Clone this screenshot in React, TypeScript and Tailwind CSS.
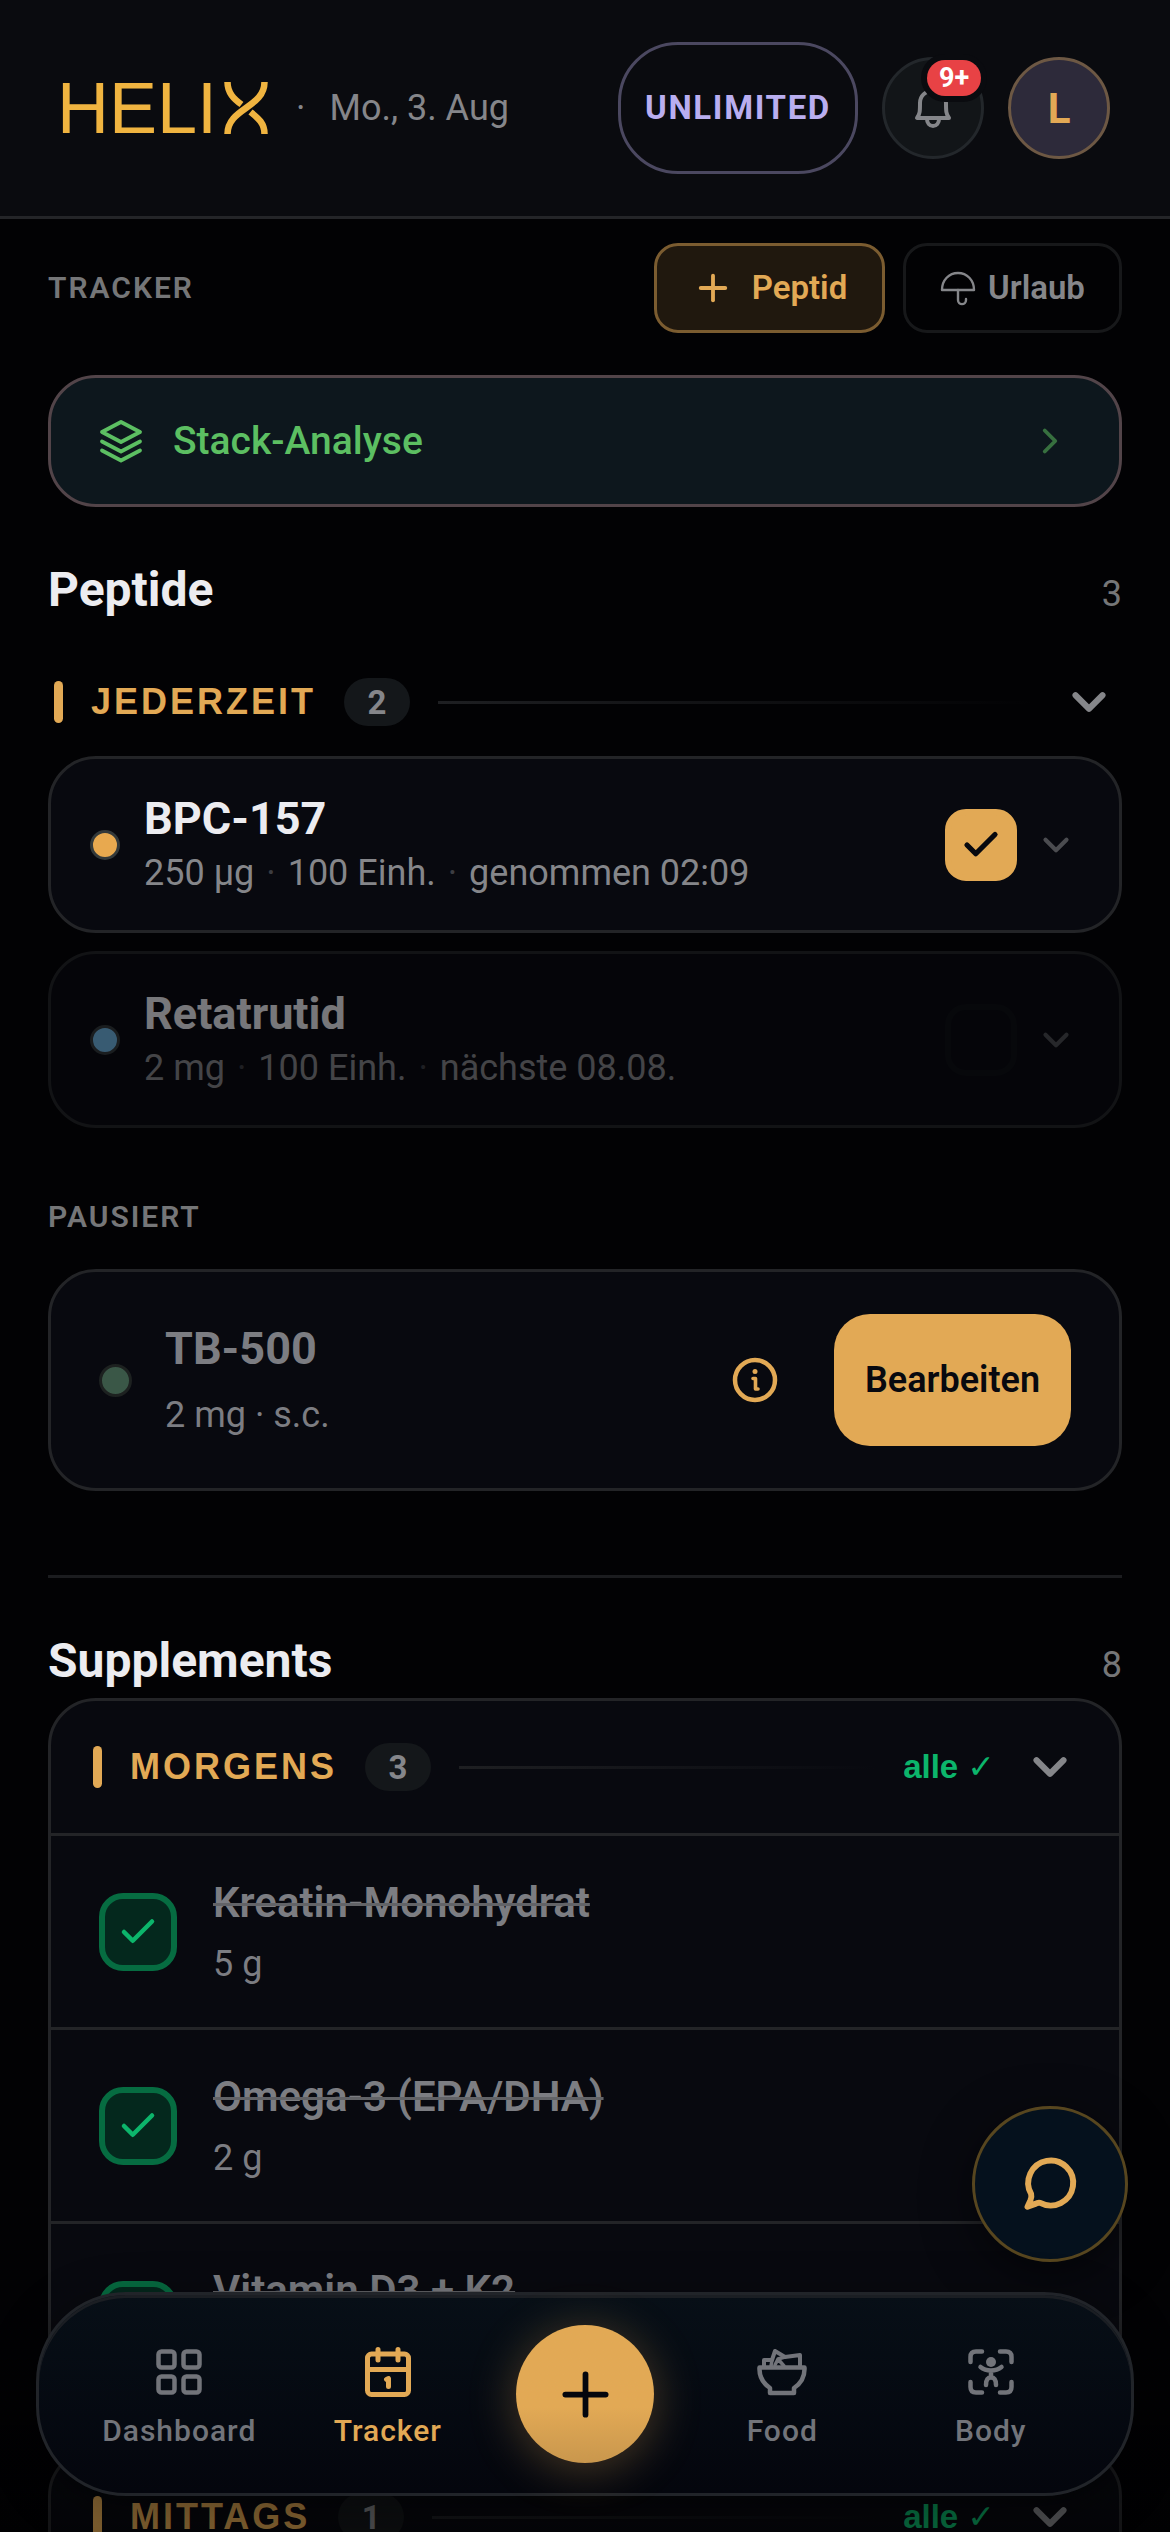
import React from "react";
import { Check, ChevronDown, ChevronRight, Plus } from "lucide-react";

interface Peptide {
  name: string;
  details: string[];
  dot: string;
  taken: boolean;
}

interface Supplement {
  name: string;
  dose: string;
}

const peptides: Peptide[] = [
  {
    name: "BPC-157",
    details: ["250 µg", "100 Einh.", "genommen 02:09"],
    dot: "bg-[#e8a94f] border-[#33393a]",
    taken: true,
  },
  {
    name: "Retatrutid",
    details: ["2 mg", "100 Einh.", "nächste 08.08."],
    dot: "bg-[#6fb3e0] border-[#33393a]",
    taken: false,
  },
];

const morningSupplements: Supplement[] = [
  { name: "Kreatin-Monohydrat", dose: "5 g" },
  { name: "Omega-3 (EPA/DHA)", dose: "2 g" },
  { name: "Vitamin D3 + K2", dose: "1 Kapsel" },
];

function HelixMark() {
  return (
    <svg viewBox="0 0 44 52" className="ml-[7px] w-[44px] h-[52px]" fill="none" stroke="#f0b440" strokeWidth="6.5">
      <path d="M3.5 0C3.5 11 10 17 17.5 22.5" />
      <path d="M26.5 30C34 36 40.500 41 40.500 52" />
      <path d="M40.500 0C40.500 26 3.500 26 3.500 52" />
    </svg>
  );
}

function BellIcon() {
  return (
    <svg viewBox="0 0 40 42" className="w-10 h-[42px]" fill="none" stroke="#85868a" strokeWidth="4" strokeLinecap="round" strokeLinejoin="round">
      <path d="M4 31H36C33 27 33 24 33 16C33 9 28 4 20 4S7 9 7 16C7 24 7 27 4 31Z" />
      <path d="M14 32C14 36 16.500 39 20 39S26 36 26 32" />
    </svg>
  );
}

function UmbrellaIcon() {
  return (
    <svg viewBox="0 0 36 36" className="w-9 h-9" fill="none" stroke="currentColor" strokeWidth="2.400" strokeLinecap="round" strokeLinejoin="round">
      <path d="M2 20C2 10 9 3 18 3S34 10 34 20Z" />
      <path d="M18 20V30C18 35.500 26 35.500 26 30V29" />
    </svg>
  );
}

function StackIcon() {
  return (
    <svg viewBox="0 0 44 44" className="w-11 h-11" fill="none" stroke="currentColor" strokeWidth="3.800" strokeLinecap="round" strokeLinejoin="round">
      <path d="M22 3L41 13L22 23L3 13Z" />
      <path d="M3 22.500L22 32.500L41 22.500" />
      <path d="M3 31.500L22 41.500L41 31.500" />
    </svg>
  );
}

function InfoIcon() {
  return (
    <svg viewBox="0 0 46 46" className="w-[46px] h-[46px]" fill="none" stroke="currentColor" strokeWidth="4.500" strokeLinecap="round" strokeLinejoin="round">
      <circle cx="23" cy="23" r="20" />
      <path d="M21 21.500H23.500V32H26" strokeWidth="3.600" />
      <circle cx="23" cy="14.500" r="2.500" fill="currentColor" stroke="none" />
    </svg>
  );
}

function ChatIcon() {
  return (
    <svg viewBox="0 0 24 24" className="w-[62px] h-[62px]" fill="none" stroke="currentColor" strokeWidth="2.300" strokeLinecap="round" strokeLinejoin="round">
      <path d="M8.200 19.300A8.700 8.700 0 1 0 4.700 15.900Q5 17 4.400 18.400L3.300 20.800L6.300 19.700Q7.300 19.100 8.200 19.300Z" />
    </svg>
  );
}

function DashboardIcon() {
  return (
    <svg viewBox="0 0 50 50" className="w-[50px] h-[50px]" fill="none" stroke="currentColor" strokeWidth="4.500">
      <rect x="4.500" y="4.500" width="16" height="16" rx="3" />
      <rect x="29.500" y="4.500" width="16" height="16" rx="3" />
      <rect x="4.500" y="29.500" width="16" height="16" rx="3" />
      <rect x="29.500" y="29.500" width="16" height="16" rx="3" />
    </svg>
  );
}

function TrackerIcon() {
  return (
    <svg viewBox="0 0 50 50" className="w-[50px] h-[50px]" fill="none" stroke="currentColor" strokeWidth="5" strokeLinecap="round" strokeLinejoin="round">
      <rect x="4.500" y="7" width="41" height="40.500" rx="4" />
      <path d="M5 22.500H45M15 2.500V13M35 2.500V13" />
      <path d="M23.500 32.500L25.500 31.500V39.500" />
    </svg>
  );
}

function FoodIcon() {
  return (
    <svg viewBox="0 0 50 50" className="w-[50px] h-[50px]" fill="none" stroke="currentColor" strokeWidth="4.500" strokeLinecap="round" strokeLinejoin="round">
      <path d="M2.500 20.500H47.500C48 30 43 37 37 41V46H13V41C7 37 2 30 2.500 20.500Z" />
      <path d="M7 19V13H15L18 4L28 10L43 8V19" strokeWidth="4" />
      <path d="M15 13L14 19M18 18L21 12L28 10M21 12L27 19" strokeWidth="3.500" />
    </svg>
  );
}

function BodyIcon() {
  return (
    <svg viewBox="0 0 50 50" className="w-[50px] h-[50px]" fill="none" stroke="currentColor" strokeWidth="4.500" strokeLinecap="round" strokeLinejoin="round">
      <path d="M4.500 15V10Q4.500 4.500 10 4.500H16M34 4.500H40Q45.500 4.500 45.500 10V15M45.500 35V40Q45.500 45.500 40 45.500H34M16 45.500H10Q4.500 45.500 4.500 40V35" />
      <circle cx="25" cy="15" r="5" fill="currentColor" stroke="none" />
      <path d="M14.500 20C20 24.500 30 24.500 35.500 20M25 24V30M20 38C20 32 22 30.500 25 30.500S30 32 30 38" />
    </svg>
  );
}

function GroupHeader({ title, count, done }: { title: string; count: number; done?: boolean }) {
  return (
    <div className="flex items-center gap-7">
      <span className="w-[9px] h-[42px] rounded-full bg-[#e2a955]" />
      <h3 className="font-['Liberation_Sans',sans-serif] font-bold text-[36px] leading-[42px] tracking-[3px] text-[#e2a955]">
        {title}
      </h3>
      <span className="w-[66px] h-12 rounded-full bg-[#14171a] flex items-center justify-center font-bold text-[33px] leading-none text-[#85868a]">
        {count}
      </span>
      <span className="flex-1 h-[3px] bg-gradient-to-r from-[#1e1f22] to-transparent" />
      {done && (
        <span className="font-['Liberation_Sans','DejaVu_Sans',sans-serif] font-bold text-[33px] leading-[42px] text-[#0cb56b]">
          alle ✓
        </span>
      )}
      <button aria-label={`${title} einklappen`} className="text-[#85868a]">
        <ChevronDown size={54} strokeWidth={2.7} />
      </button>
    </div>
  );
}

function PeptideCard({ peptide }: { peptide: Peptide }) {
  const { name, details, dot, taken } = peptide;
  return (
    <article
      className={`flex items-center h-[177px] pl-[39px] pr-[42px] rounded-[48px] border-3 border-[#232427] bg-[#08090f] ${
        taken ? "" : "opacity-50"
      }`}>
      <span className={`w-[30px] h-[30px] mr-6 shrink-0 rounded-full border-3 ${dot}`} />
      <div className="flex-1 flex flex-col gap-[3px]">
        <h4 className="font-bold text-[45px] leading-[54px] text-[#ececf0]">{name}</h4>
        <p className="flex gap-3 text-[36px] leading-12 text-[#85868a]">
          {details.map((detail, index) => (
            <React.Fragment key={detail}>
              {index > 0 && <span className="text-[#3c3d42]">·</span>}
              <span>{detail}</span>
            </React.Fragment>
          ))}
        </p>
      </div>
      <label className="relative mr-[18px]">
        <input
          type="checkbox"
          aria-label={`${name} genommen`}
          defaultChecked={taken}
          className="peer block appearance-none w-[72px] h-[72px] rounded-[21px] border-6 border-[#0d0e13] checked:border-[#e2a955] checked:bg-[#e2a955]"
        />
        <Check
          size={42}
          strokeWidth={3}
          className="absolute inset-[15px] hidden peer-checked:block text-[#08090f] pointer-events-none"
        />
      </label>
      <button aria-label={`${name} Details`} className="text-[#4b4c50]">
        <ChevronDown size={42} strokeWidth={2.4} />
      </button>
    </article>
  );
}

function SupplementRow({ item }: { item: Supplement }) {
  return (
    <label className="flex items-center gap-9 h-[194px] px-12 border-t-3 border-[#232427]">
      <span className="relative">
        <input
          type="checkbox"
          defaultChecked
          className="peer block appearance-none w-[78px] h-[78px] rounded-3xl border-6 border-[#066c41] bg-[#04281d]"
        />
        <Check
          size={42}
          strokeWidth={2.6}
          className="absolute inset-[18px] hidden peer-checked:block text-[#0cb56b] pointer-events-none"
        />
      </span>
      <span className="flex flex-col gap-[10px] text-[#7c7d82]">
        <span className="font-semibold text-[42px] leading-[54px] line-through decoration-3 decoration-[#626367]">
          {item.name}
        </span>
        <span className="text-[36px] leading-12">{item.dose}</span>
      </span>
    </label>
  );
}

function SectionTitle({ title, count }: { title: string; count: number }) {
  return (
    <div className="flex items-baseline justify-between">
      <h2 className="font-bold text-[48px] leading-[60px] text-[#ececf0]">{title}</h2>
      <span className="text-[36px] leading-12 text-[#757678]">{count}</span>
    </div>
  );
}

function NavItem({ label, icon, active }: { label: string; icon: React.ReactNode; active?: boolean }) {
  return (
    <a
      href="#"
      className={`flex-1 flex flex-col items-center gap-4 pt-2 ${active ? "text-[#e2a955]" : "text-[#72747a]"}`}>
      {icon}
      <span className="font-medium text-[30px] leading-9 tracking-[1px]">{label}</span>
    </a>
  );
}

export default function App() {
  return (
    <div className="relative h-screen overflow-hidden flex flex-col bg-[#020204] font-[Roboto,sans-serif]">
      <header className="flex items-center gap-6 h-[219px] shrink-0 pl-[57px] pr-[60px] border-b-3 border-[#242528] bg-[#0a0b0f]">
        <div className="flex-1 flex items-center">
          <span className="font-['Liberation_Sans',sans-serif] text-[72px] leading-[72px] text-[#f0b440]">HELI</span>
          <HelixMark />
          <span className="ml-7 text-[36px] leading-12 text-[#85868a]">·</span>
          <span className="ml-6 text-[36px] leading-12 text-[#85868a]">Mo., 3. Aug</span>
        </div>
        <button className="h-[132px] w-[240px] rounded-[60px] border-3 border-[#4b4860] font-bold text-[33px] tracking-wider text-[#b9aef0]">
          UNLIMITED
        </button>
        <button
          aria-label="Benachrichtigungen"
          className="relative w-[102px] h-[102px] rounded-full border-3 border-[#23272b] bg-[#121518] flex items-center justify-center">
          <BellIcon />
          <span className="absolute top-0 right-0 w-[54px] h-9 rounded-full bg-[#e84245] ring-6 ring-[#0a0b0f] flex items-center justify-center font-bold text-[27px] leading-none text-white">
            9+
          </span>
        </button>
        <button
          aria-label="Profil"
          className="w-[102px] h-[102px] rounded-full border-3 border-[#6d5844] bg-[#2d2a3a] font-bold text-[42px] text-[#e2a955]">
          L
        </button>
      </header>

      <main className="flex-1 min-h-0 overflow-y-auto [scrollbar-width:none] px-12 pt-6 pb-[300px]">
        <div className="flex items-center gap-[18px]">
          <h1 className="flex-1 font-semibold text-[30px] leading-9 tracking-[2px] text-[#757678]">TRACKER</h1>
          <button className="flex items-center justify-center gap-[18px] w-[231px] h-[90px] rounded-3xl border-3 border-[#7b5c30] bg-[#20180e] font-semibold text-[33px] text-[#e2a955]">
            <Plus size={42} strokeWidth={2.2} />
            Peptid
          </button>
          <button className="flex items-center justify-center gap-3 w-[219px] h-[90px] rounded-3xl border-3 border-[#17181a] font-semibold text-[33px] text-[#85868a]">
            <UmbrellaIcon />
            Urlaub
          </button>
        </div>

        <button className="mt-[42px] w-full h-[132px] px-12 flex items-center gap-[30px] rounded-[48px] border-3 border-[#524449] bg-[#0d171d] text-[#5cbf62]">
          <StackIcon />
          <span className="flex-1 text-left font-medium text-[39px]">Stack-Analyse</span>
          <ChevronRight size={42} strokeWidth={2.2} className="text-[#37703f]" />
        </button>

        <section className="mt-[53px]">
          <SectionTitle title="Peptide" count={3} />
          <div className="mt-[55px] px-[6px]">
            <GroupHeader title="JEDERZEIT" count={2} />
          </div>
          <div className="mt-[27px] flex flex-col gap-[18px]">
            {peptides.map((peptide) => (
              <PeptideCard key={peptide.name} peptide={peptide} />
            ))}
          </div>

          <h3 className="mt-[71px] font-semibold text-[30px] leading-9 tracking-[2px] text-[#757678]">PAUSIERT</h3>
          <article className="mt-[34px] h-[222px] px-12 flex items-center rounded-[48px] border-3 border-[#232427] bg-[#08090f]">
            <span className="w-[33px] h-[33px] mr-[33px] rounded-full border-3 border-[#1d2120] bg-[#3a5747]" />
            <div className="flex-1 flex flex-col gap-[15px] text-[#7c7d82]">
              <h4 className="font-bold text-[45px] leading-[54px]">TB-500</h4>
              <p className="text-[36px] leading-12">2 mg · s.c.</p>
            </div>
            <button aria-label="Info" className="mr-14 text-[#e2a955]">
              <InfoIcon />
            </button>
            <button className="w-[237px] h-[132px] rounded-[36px] bg-[#e2a955] font-semibold text-[36px] text-[#08090f]">
              Bearbeiten
            </button>
          </article>
        </section>

        <hr className="mt-[84px] border-t-3 border-[#1b1c1f]" />

        <section className="mt-[53px]">
          <SectionTitle title="Supplements" count={8} />
          <div className="mt-[7px] rounded-[48px] border-3 border-[#232427] bg-[#08090f]">
            <div className="h-[132px] px-[42px] flex flex-col justify-center">
              <GroupHeader title="MORGENS" count={3} done />
            </div>
            {morningSupplements.map((item) => (
              <SupplementRow key={item.name} item={item} />
            ))}
          </div>
          <div className="mt-[30px] rounded-[48px] border-3 border-[#232427] bg-[#08090f]">
            <div className="h-[132px] px-[42px] flex flex-col justify-center">
              <GroupHeader title="MITTAGS" count={1} done />
            </div>
          </div>
        </section>
      </main>

      {/* fade behind the tab bar */}
      <div className="absolute inset-x-0 bottom-0 h-60 bg-gradient-to-t from-black/45 to-transparent pointer-events-none" />

      <button
        aria-label="Chat"
        className="absolute right-[42px] bottom-[270px] w-[156px] h-[156px] rounded-full border-3 border-[#57461f] bg-[#05111d] text-[#e2a955] flex items-center justify-center shadow-[0_12px_48px_#00000080]">
        <ChatIcon />
      </button>

      <nav className="absolute inset-x-9 bottom-9 h-[204px] px-9 flex items-center rounded-[90px] border-3 border-[#212429] bg-gradient-to-b from-[#070f17] to-[#04060d] shadow-[inset_0_3px_0_#1b1e23,0_12px_48px_#00000066]">
        <NavItem label="Dashboard" icon={<DashboardIcon />} />
        <NavItem label="Tracker" icon={<TrackerIcon />} active />
        <div className="w-[186px] flex justify-center">
          <button
            aria-label="Hinzufügen"
            className="w-[138px] h-[138px] rounded-full bg-gradient-to-b from-[#e2a955] from-60% to-[#c9974d] text-[#04060d] flex items-center justify-center shadow-[0_6px_48px_#e2a95550]">
            <Plus size={69} strokeWidth={2} />
          </button>
        </div>
        <NavItem label="Food" icon={<FoodIcon />} />
        <NavItem label="Body" icon={<BodyIcon />} />
      </nav>
    </div>
  );
}
